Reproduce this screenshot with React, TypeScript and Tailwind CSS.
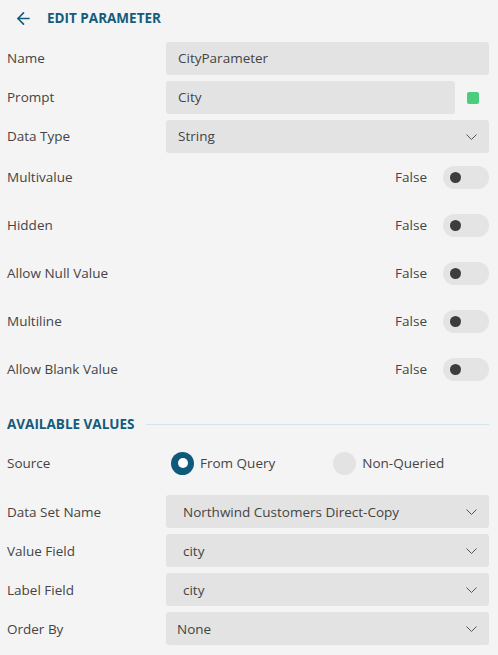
import { ArrowLeft } from "lucide-react";

function Chevron() {
    return (
        <svg width="11" height="6" viewBox="0 0 11 6" fill="none" className="text-[#555]">
            <path d="M0.5 0.5L5.5 5.5L10.5 0.5" stroke="currentColor" strokeWidth="1" />
        </svg>
    );
}

function Label({ children }: { children: React.ReactNode }) {
    return <div className="w-[159px] shrink-0 text-[13.5px] text-[#444]">{children}</div>;
}

function TextRow({ label, value, extra }: { label: string; value: string; extra?: boolean }) {
    return (
        <div className="flex items-center">
            <Label>{label}</Label>
            <div className="flex flex-1 items-center">
                <div className="flex h-[33px] flex-1 items-center rounded-[3px] bg-[#e3e3e3] px-3 text-[13.5px] text-[#444]">
                    {value}
                </div>
                {extra && (
                    <div className="flex w-[34px] justify-center pl-[1px]">
                        <span className="h-[12px] w-[12px] rounded-[2px] bg-[#4bcd7c]" />
                    </div>
                )}
            </div>
        </div>
    );
}

function SelectRow({ label, value, pad = "pl-[17px]" }: { label: string; value: string; pad?: string }) {
    return (
        <div className="flex items-center">
            <Label>{label}</Label>
            <div className={`flex h-[33px] flex-1 items-center justify-between rounded-[3px] bg-[#e3e3e3] pr-[12px] text-[13.5px] text-[#444] ${pad}`}>
                <span>{value}</span>
                <Chevron />
            </div>
        </div>
    );
}

function ToggleRow({ label }: { label: string }) {
    return (
        <div className="flex h-12 items-center">
            <Label>{label}</Label>
            <div className="flex flex-1 items-center justify-end gap-[16px]">
                <span className="text-[13.5px] text-[#444]">False</span>
                <div className="flex h-[23px] w-[46px] items-center rounded-full bg-[#e4e4e4] pl-[7px]">
                    <span className="h-[11px] w-[11px] rounded-full bg-[#3d3d3d]" />
                </div>
            </div>
        </div>
    );
}

export default function App() {
    return (
        <div
            className="h-[655px] w-[498px] bg-[#f4f4f4] pl-[7px] pr-[9px]"
            style={{ fontFamily: '"Open Sans", "Liberation Sans", sans-serif' }}
        >
            <div className="flex h-[36px] items-center pt-[1px]">
                <ArrowLeft size={19} strokeWidth={2.1} className="ml-[7px] text-[#135c7c]" />
                <span className="ml-[14px] text-[13.5px] font-bold text-[#135c7c]">EDIT PARAMETER</span>
            </div>

            <div className="mt-[6px] flex flex-col gap-[6px]">
                <TextRow label="Name" value="CityParameter" />
                <TextRow label="Prompt" value="City" extra />
                <SelectRow label="Data Type" value="String" pad="pl-3" />
            </div>

            <div className="flex flex-col">
                <ToggleRow label="Multivalue" />
                <ToggleRow label="Hidden" />
                <ToggleRow label="Allow Null Value" />
                <ToggleRow label="Multiline" />
                <ToggleRow label="Allow Blank Value" />
            </div>

            <div className="mt-[21px] flex items-center">
                <span className="text-[13.5px] font-bold text-[#135c7c]">AVAILABLE VALUES</span>
                <div className="ml-[11px] h-px flex-1 bg-[#d5e3ea]" />
            </div>

            <div className="mt-[17px] flex h-[24px] items-center">
                <Label>Source</Label>
                <div className="ml-[5px] flex items-center gap-[6px]">
                    <span className="flex h-[23px] w-[23px] items-center justify-center rounded-full bg-[#0f5a7a]">
                        <span className="h-[10px] w-[10px] rounded-full bg-white" />
                    </span>
                    <span className="text-[13.5px] text-[#444]">From Query</span>
                </div>
                <div className="ml-[58px] flex items-center gap-[6px]">
                    <span className="h-[23px] w-[23px] rounded-full bg-[#e3e3e3]" />
                    <span className="text-[13.5px] text-[#444]">Non-Queried</span>
                </div>
            </div>

            <div className="mt-[20px] flex flex-col gap-[6px]">
                <SelectRow label="Data Set Name" value="Northwind Customers Direct-Copy" />
                <SelectRow label="Value Field" value="city" />
                <SelectRow label="Label Field" value="city" />
                <SelectRow label="Order By" value="None" pad="pl-[11px]" />
            </div>
        </div>
    );
}
